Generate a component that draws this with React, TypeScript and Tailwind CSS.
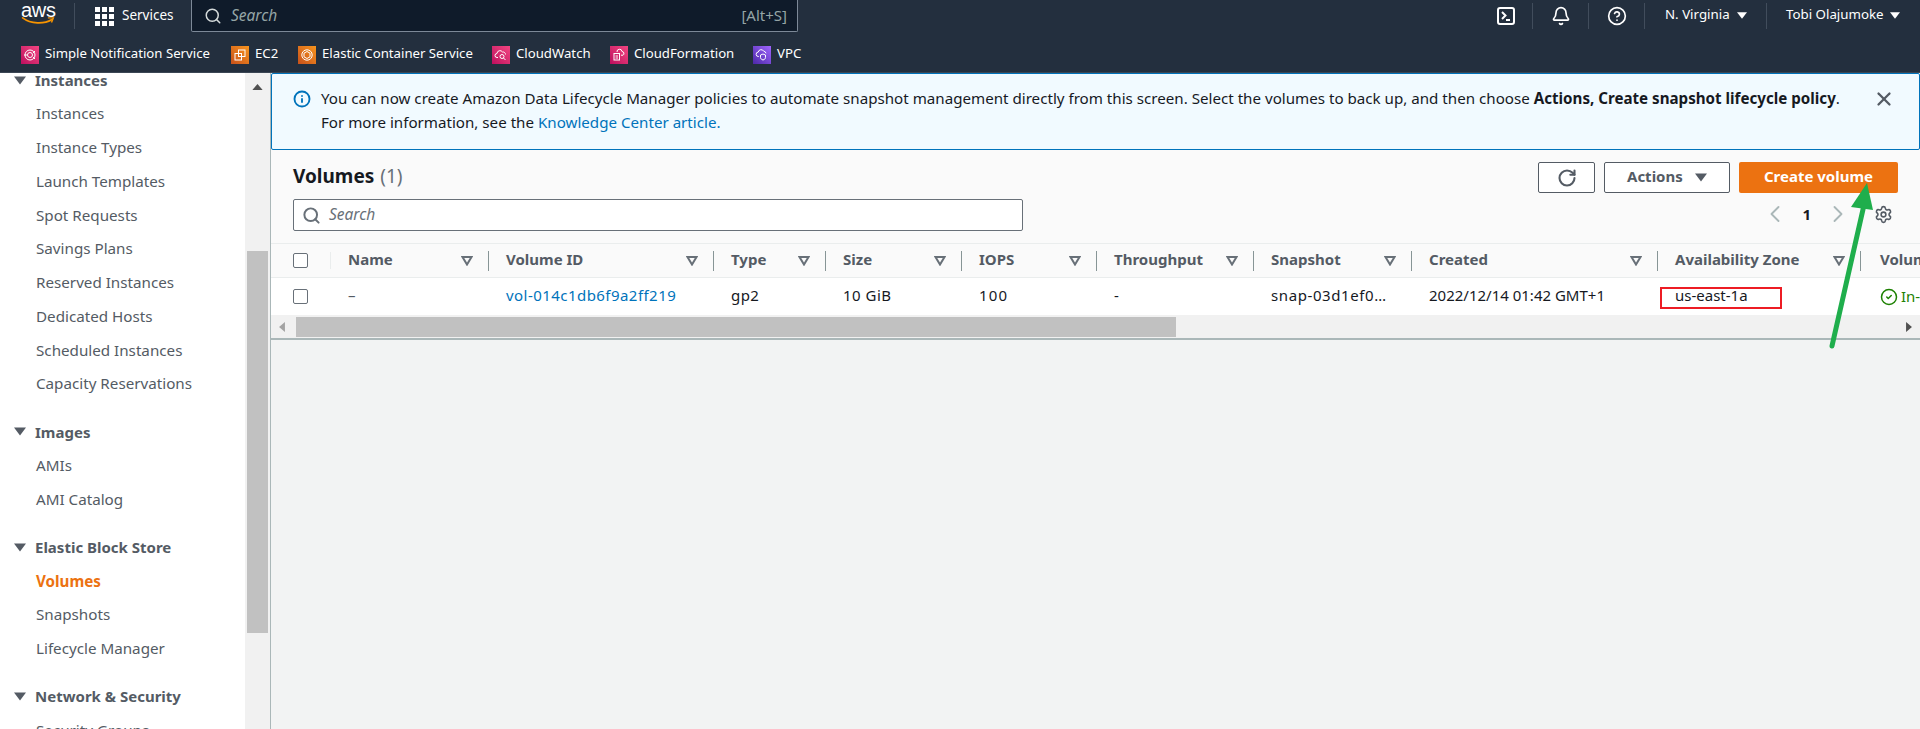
import React from "react";
import { Search, X, RotateCw, ChevronLeft, ChevronRight, Settings, CircleHelp, Bell, Info, CircleCheck } from "lucide-react";

const F = { fontFamily: '"Noto Sans", sans-serif' };

function Caret({ className = "" }: { className?: string }) {
  return (
    <svg viewBox="0 0 12 8" className={className} fill="currentColor">
      <path d="M0 0h12L6 8z" />
    </svg>
  );
}

function SortIcon() {
  return (
    <svg viewBox="0 0 12 10" className="w-[12px] h-[10px] text-[#687078]" fill="none" stroke="currentColor" strokeWidth="2">
      <path d="M1.5 1h9L6 8.5z" />
    </svg>
  );
}

const glyphs: Record<string, React.ReactNode> = {
  sns: (
    <>
      <circle cx="7" cy="7" r="5" />
      <circle cx="7" cy="7" r="2.5" />
      <path d="M1 7h3M10 5l2-2M10 9l2 2" />
    </>
  ),
  ec2: (
    <>
      <rect x="5.5" y="2" width="6.5" height="6.5" />
      <rect x="2" y="5.5" width="6.5" height="6.5" />
    </>
  ),
  ecs: (
    <>
      <circle cx="7" cy="7" r="5.2" />
      <path d="M7 3.5l3 1.7v3.6l-3 1.7-3-1.7V5.200z" />
    </>
  ),
  cw: (
    <>
      <path d="M4 9.500H3a2 2 0 0 1 0-4 3 3 0 0 1 5.500-1.500A2.500 2.500 0 0 1 11.500 6.500" />
      <circle cx="8" cy="8.500" r="2" />
      <path d="M9.500 10l2 2" />
    </>
  ),
  cf: (
    <>
      <rect x="2" y="5.500" width="5.500" height="6.500" />
      <path d="M3.500 8h2.500M3.500 10h2.500M5 4a2.500 2.500 0 0 1 5-.5 2 2 0 0 1 1 3.700H9" />
    </>
  ),
  vpc: (
    <>
      <path d="M4 8.500H3.500a2.200 2.200 0 0 1-.3-4.400 3 3 0 0 1 5.600-.8 2.400 2.400 0 0 1 2.200 2" />
      <path d="M5.500 7l2.500-1 2.500 1v2.500c0 1.200-1 2-2.500 2.500-1.500-.5-2.500-1.300-2.500-2.500z" />
    </>
  ),
};

const services = [
  { name: "Simple Notification Service", bg: "bg-gradient-to-tr from-[#bd0b5e] to-[#f34482]", g: "sns", w: "w-[210px]" },
  { name: "EC2", bg: "bg-gradient-to-tr from-[#c8511b] to-[#f7941d]", g: "ec2", w: "w-[67px]" },
  { name: "Elastic Container Service", bg: "bg-gradient-to-tr from-[#c8511b] to-[#f7941d]", g: "ecs", w: "w-[194px]" },
  { name: "CloudWatch", bg: "bg-gradient-to-tr from-[#bd0b5e] to-[#f34482]", g: "cw", w: "w-[118px]" },
  { name: "CloudFormation", bg: "bg-gradient-to-tr from-[#bd0b5e] to-[#f34482]", g: "cf", w: "w-[143px]" },
  { name: "VPC", bg: "bg-gradient-to-tr from-[#4d27a8] to-[#a166ff]", g: "vpc", w: "" },
];

function Header() {
  return (
    <header className="h-[73px] bg-[#232f3e] border-b border-[#3b4654] text-white shrink-0">
      <div className="h-[32px] flex items-center">
        <div className="w-[74px] pl-[20px] flex flex-col">
          <span className="text-[20px] leading-[14px] tracking-[-0.3px] -mt-[3px] ml-[1px]" style={{ fontFamily: '"Liberation Sans", sans-serif' }}>aws</span>
          <svg viewBox="0 0 36 10" className="w-[36px] h-[9px]" fill="none">
            <path d="M1 1c9 7 24 7 32 2" stroke="#f79400" strokeWidth="2" strokeLinecap="round" />
            <path d="M29 1l6 0-2 5" stroke="#f79400" strokeWidth="1.6" />
          </svg>
        </div>
        <div className="w-px h-[26px] bg-[#414d5c]" />
        <div className="ml-[20px] grid grid-cols-3 gap-[2px] w-[19px]">
          {Array.from({ length: 9 }).map((_, i) => (
            <div key={i} className="w-[5px] h-[5px] bg-white" />
          ))}
        </div>
        <span className="ml-[8px] w-[69px] text-[13.5px] -mt-[1px]">Services</span>
        <div className="w-[607px] h-[32px] bg-[#0f1b2a] border border-t-0 border-[#7d8998] rounded-b-[2px] flex items-center pl-[12px] pr-[10px]">
          <Search className="w-[18px] h-[18px] text-[#d5dbdb]" strokeWidth={2} />
          <span className="ml-[9px] italic text-[15.5px] text-[#95a5a6]">Search</span>
          <span className="ml-auto text-[15px] text-[#95a5a6]">[Alt+S]</span>
        </div>
        <div className="ml-auto flex items-center h-[26px]">
          <div className="w-[56px] h-full flex items-center justify-center border-r border-[#414d5c]">
            <svg viewBox="0 0 18 18" className="w-[18px] h-[18px] ml-[2px]" fill="none" stroke="white" strokeWidth="2">
              <rect x="1" y="1" width="16" height="16" rx="2" />
              <path d="M5 5l3.500 3.500L5 12M9 13h4" />
            </svg>
          </div>
          <div className="w-[56px] h-full flex items-center justify-center border-r border-[#414d5c]">
            <Bell className="w-[20px] h-[20px]" strokeWidth={2} />
          </div>
          <div className="w-[56px] h-full flex items-center justify-center border-r border-[#414d5c]">
            <CircleHelp className="w-[20px] h-[20px]" strokeWidth={2} />
          </div>
          <div className="w-[121px] h-full flex items-center pl-[20px] text-[13.3px] -mt-[2px]">
            <span>N. Virginia</span>
            <Caret className="w-[10px] h-[7px] ml-[7px]" />
          </div>
          <div className="h-full w-px bg-[#414d5c]" />
          <div className="w-[153px] h-full flex items-center pl-[19px] text-[13.3px] -mt-[2px]">
            <span>Tobi Olajumoke</span>
            <Caret className="w-[10px] h-[7px] ml-[6px]" />
          </div>
        </div>
      </div>
      <div className="h-[40px] flex items-center pl-[21px] pt-[6px] text-[13.2px]">
        {services.map((s) => (
          <div key={s.name} className={`flex items-center shrink-0 ${s.w}`}>
            <div className={`w-[18px] h-[18px] ${s.bg} flex items-center justify-center`}>
              <svg viewBox="0 0 14 14" className="w-[14px] h-[14px]" fill="none" stroke="white" strokeWidth="1">
                {glyphs[s.g]}
              </svg>
            </div>
            <span className="ml-[6px] whitespace-nowrap -mt-[2px]">{s.name}</span>
          </div>
        ))}
      </div>
    </header>
  );
}

const nav: { title: string; items: string[] }[] = [
  { title: "Instances", items: ["Instances", "Instance Types", "Launch Templates", "Spot Requests", "Savings Plans", "Reserved Instances", "Dedicated Hosts", "Scheduled Instances", "Capacity Reservations"] },
  { title: "Images", items: ["AMIs", "AMI Catalog"] },
  { title: "Elastic Block Store", items: ["Volumes", "Snapshots", "Lifecycle Manager"] },
  { title: "Network & Security", items: ["Security Groups"] },
];

function Sidebar() {
  return (
    <aside className="w-[271px] shrink-0 flex border-r border-[#aab7b8] bg-white overflow-hidden">
      <div className="w-[245px] -mt-[10px]">
        {nav.map((g) => (
          <div key={g.title} className="mb-[14px]">
            <div className="h-[34px] flex items-center pl-[14px] text-[15px] font-bold text-[#545b64]">
              <Caret className="w-[12px] h-[9px] mr-[9px] text-[#545b64]" />
              {g.title}
            </div>
            {g.items.map((i) => (
              <div key={i} className={`h-[33.75px] flex items-center pl-[36px] text-[15.2px] ${i === "Volumes" ? "font-bold text-[#ec7211]" : "text-[#545b64]"}`}>
                {i}
              </div>
            ))}
          </div>
        ))}
      </div>
      <div className="relative w-[25px] bg-[#f1f1f1]">
        <svg viewBox="0 0 12 7" className="absolute left-[7px] top-[11px] w-[11px] h-[6px] text-[#505050]" fill="currentColor">
          <path d="M6 0l6 7H0z" />
        </svg>
        <div className="absolute left-[2px] top-[178px] w-[21px] h-[382px] bg-[#c1c1c1]" />
      </div>
    </aside>
  );
}

const cols: { title: string; w: number; v?: string; c?: string }[] = [
  { title: "", w: 60 },
  { title: "Name", w: 158, v: "–", c: "text-[#545b64]" },
  { title: "Volume ID", w: 225, v: "vol-014c1db6f9a2ff219", c: "text-[#0073bb] tracking-[0.45px]" },
  { title: "Type", w: 112, v: "gp2", c: "tracking-[0.4px]" },
  { title: "Size", w: 136, v: "10 GiB", c: "tracking-[0.5px]" },
  { title: "IOPS", w: 135, v: "100", c: "tracking-[1.2px]" },
  { title: "Throughput", w: 157, v: "-" },
  { title: "Snapshot", w: 158, v: "snap-03d1ef0…", c: "tracking-[0.6px]" },
  { title: "Created", w: 246, v: "2022/12/14 01:42 GMT+1" },
  { title: "Availability Zone", w: 203, v: "us-east-1a" },
];

function Checkbox() {
  return <div className="w-[15px] h-[15px] bg-white border border-[#687078] rounded-[2px]" />;
}

function Table() {
  return (
    <div className="overflow-hidden">
      <div className="flex h-[35px] bg-[#fafafa] border-y border-[#eaeded] text-[15px] font-bold text-[#545b64]">
        <div className="w-[60px] shrink-0 flex items-center pl-[22px] relative">
          <Checkbox />
          <div className="absolute right-0 top-[8px] h-[17px] w-px bg-[#eaeded]" />
        </div>
        {cols.slice(1).map((c) => (
          <div key={c.title} style={{ width: c.w }} className="shrink-0 flex items-center pl-[17px] pr-[16px] relative">
            <span className="flex-1 whitespace-nowrap -mt-[2px]">{c.title}</span>
            <SortIcon />
            <div className="absolute right-0 top-[7px] h-[20px] w-px bg-[#879596]" />
          </div>
        ))}
        <div className="pl-[19px] flex items-center whitespace-nowrap -mt-[2px]">Volume state</div>
      </div>
      <div className="flex h-[37px] bg-white text-[15px] text-[#16191f]">
        <div className="w-[60px] shrink-0 flex items-center pl-[22px]">
          <Checkbox />
        </div>
        {cols.slice(1).map((c) => (
          <div key={c.title} style={{ width: c.w }} className={`shrink-0 flex items-center pl-[17px] pb-[2px] whitespace-nowrap ${c.c ?? ""}`}>
            {c.v}
          </div>
        ))}
        <div className="pl-[19px] flex items-center whitespace-nowrap text-[#1d8102]">
          <CircleCheck className="w-[18px] h-[18px] mr-[3px]" strokeWidth={2} />
          In-use
        </div>
      </div>
      <div className="h-[23px] bg-[#f1f1f1] flex items-center">
        <svg viewBox="0 0 7 12" className="ml-[8px] w-[6px] h-[10px] text-[#a3a3a3]" fill="currentColor"><path d="M7 0v12L0 6z" /></svg>
        <div className="ml-[11px] w-[880px] h-[20px] bg-[#c1c1c1]" />
        <svg viewBox="0 0 7 12" className="ml-auto mr-[8px] w-[6px] h-[10px] text-[#505050]" fill="currentColor"><path d="M0 0v12l7-6z" /></svg>
      </div>
    </div>
  );
}

function Main() {
  return (
    <main className="flex-1 min-w-0 bg-[#f2f3f3] flex flex-col overflow-hidden">
      <div className="h-[77px] shrink-0 bg-[#f1faff] border border-[#0073bb] rounded-[2px] flex pl-[21px] pr-[24px] pt-[12px] text-[15.15px] leading-[24px] text-[#16191f]">
        <Info className="w-[18px] h-[18px] mt-[4px] text-[#0073bb]" strokeWidth={2.5} />
        <div className="ml-[10px] flex-1 whitespace-nowrap">
          <div>
            You can now create Amazon Data Lifecycle Manager policies to automate snapshot management directly from this screen. Select the volumes to back up, and then choose <b>Actions, Create snapshot lifecycle policy</b>.
          </div>
          <div>
            For more information, see the <span className="text-[#0073bb]">Knowledge Center article.</span>
          </div>
        </div>
        <X className="w-[22px] h-[22px] mt-[2px] text-[#545b64]" strokeWidth={2.5} />
      </div>
      <div className="bg-[#fafafa] border-b-2 border-[#aab7b8] shrink-0">
        <div className="h-[93px] pl-[22px] pr-[22px] pt-[12px] flex">
          <div className="flex-1">
            <div className="h-[30px] flex items-center text-[19px] font-bold text-[#16191f] -mt-[1px]">
              Volumes <span className="ml-[6px] font-normal text-[#687078]">(1)</span>
            </div>
            <div className="mt-[8px] w-[730px] h-[32px] bg-white border border-[#687078] rounded-[2px] flex items-center pl-[8px]">
              <Search className="w-[19px] h-[19px] text-[#687078]" strokeWidth={2.5} />
              <span className="ml-[8px] italic text-[15.5px] text-[#687078]">Search</span>
            </div>
          </div>
          <div className="w-[360px] flex flex-col items-end">
            <div className="flex gap-[9px]">
              <div className="w-[57px] h-[31px] bg-white border border-[#545b64] rounded-[2px] flex items-center justify-center">
                <RotateCw className="w-[20px] h-[20px] text-[#545b64]" strokeWidth={2.5} />
              </div>
              <div className="w-[126px] h-[31px] bg-white border border-[#545b64] rounded-[2px] flex items-center pl-[22px] text-[15px] font-bold text-[#545b64]">
                <span className="-mt-[2px]">Actions</span>
                <Caret className="w-[12px] h-[9px] ml-[12px]" />
              </div>
              <div className="w-[159px] h-[31px] bg-[#ec7211] rounded-[2px] flex items-center justify-center text-[15px] font-bold text-white">
                <span className="-mt-[2px]">Create volume</span>
              </div>
            </div>
            <div className="mt-[10px] flex items-center h-[22px] text-[#aab7b8] pr-[5px]">
              <ChevronLeft className="w-[28px] h-[28px]" strokeWidth={1.6} />
              <span className="mx-[13px] text-[15px] font-bold text-[#16191f]">1</span>
              <ChevronRight className="w-[28px] h-[28px]" strokeWidth={1.6} />
              <Settings className="ml-[22px] w-[19px] h-[19px] text-[#545b64]" strokeWidth={2} />
            </div>
          </div>
        </div>
        <Table />
      </div>
    </main>
  );
}

export default function App() {
  return (
    <div className="relative w-[1920px] h-[729px] flex flex-col overflow-hidden" style={F}>
      <Header />
      <div className="flex flex-1 min-h-0">
        <Sidebar />
        <Main />
      </div>
      <div className="absolute left-[1660px] top-[287px] w-[122px] h-[22px] border-2 border-[#ed1c24]" />
      <svg className="absolute left-[1820px] top-[175px] w-[70px] h-[180px]" viewBox="0 0 70 180" fill="none">
        <path d="M12 171L44 30" stroke="#1fae4c" strokeWidth="5" strokeLinecap="round" />
        <path d="M47 8L31 32L53 35z" fill="#1fae4c" />
      </svg>
    </div>
  );
}
